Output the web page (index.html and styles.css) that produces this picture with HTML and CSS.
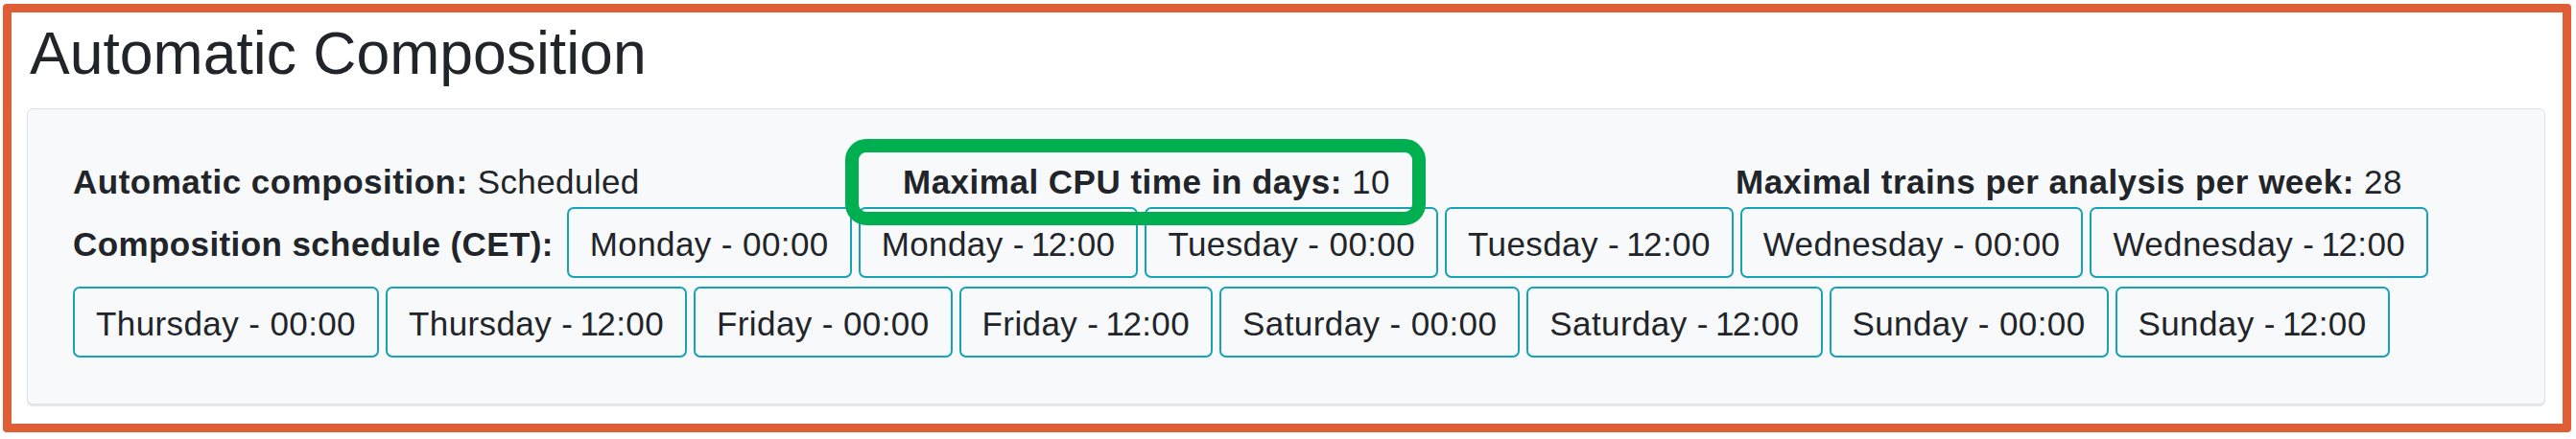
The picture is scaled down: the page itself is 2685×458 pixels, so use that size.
FILE: index.html
```html
<!DOCTYPE html>
<html lang="en">
<head>
<meta charset="utf-8">
<title>Automatic Composition</title>
<link rel="stylesheet" href="styles.css">
</head>
<body>
<div class="frame">
  <h2 class="title">Automatic Composition</h2>
  <div class="panel">
    <div class="stats">
      <div class="stat"><b>Automatic composition:</b> Scheduled</div>
      <div class="stat"><b>Maximal CPU time in days:</b> 10</div>
      <div class="stat"><b>Maximal trains per analysis per week:</b> 28</div>
    </div>
    <div class="schedule">
      <span class="schedule-label">Composition schedule (CET):</span>
      <span class="slot">Monday - 00:00</span>
      <span class="slot">Monday - <span class="one">1</span>2:00</span>
      <span class="slot">Tuesday - 00:00</span>
      <span class="slot">Tuesday - <span class="one">1</span>2:00</span>
      <span class="slot">Wednesday - 00:00</span>
      <span class="slot">Wednesday - <span class="one">1</span>2:00</span>
      <span class="slot">Thursday - 00:00</span>
      <span class="slot">Thursday - <span class="one">1</span>2:00</span>
      <span class="slot">Friday - 00:00</span>
      <span class="slot">Friday - <span class="one">1</span>2:00</span>
      <span class="slot">Saturday - 00:00</span>
      <span class="slot">Saturday - <span class="one">1</span>2:00</span>
      <span class="slot">Sunday - 00:00</span>
      <span class="slot">Sunday - <span class="one">1</span>2:00</span>
    </div>
  </div>
  <div class="highlight"></div>
</div>
</body>
</html>
```

FILE: styles.css
```css
* {
  box-sizing: border-box;
}

body {
  margin: 0;
  background: #ffffff;
  font-family: "Liberation Sans", Arial, Helvetica, sans-serif;
  color: #212529;
}

.frame {
  position: relative;
  margin: 4px 5px 0 3px;
  border: 9px solid #e05e35;
  border-radius: 4px;
  padding: 5px 18px 20px 16px;
}

.title {
  margin: 0 0 19px 3px;
  font-size: 62.5px;
  font-weight: 400;
  line-height: 75.6px;
}

.panel {
  background: #f8f9fa;
  border: 1px solid #dfe2e6;
  border-radius: 6px;
  box-shadow: 0 2px 1px rgba(0, 0, 0, 0.10);
  padding: 50px 47px 48px 47px;
  font-size: 35px;
  line-height: 52.5px;
  letter-spacing: 0.4px;
}

.stats {
  display: grid;
  grid-template-columns: 865px 868px auto;
}

.stat b {
  font-weight: 700;
  letter-spacing: 0.5px;
}

.schedule {
  display: flex;
  flex-wrap: wrap;
  align-items: baseline;
  gap: 9px 7px;
}

.schedule-label {
  font-weight: 700;
  margin-right: 7px;
}

.slot {
  border: 2px solid #17a2b8;
  border-radius: 7px;
  padding: 11px 22px 7px;
  line-height: 52px;
  white-space: nowrap;
}

.one {
  margin: 0 -2px 0 -3px;
}

.highlight {
  position: absolute;
  left: 869px;
  top: 132px;
  width: 605px;
  height: 90px;
  border: 14px solid #00b050;
  border-radius: 22px;
}
```
